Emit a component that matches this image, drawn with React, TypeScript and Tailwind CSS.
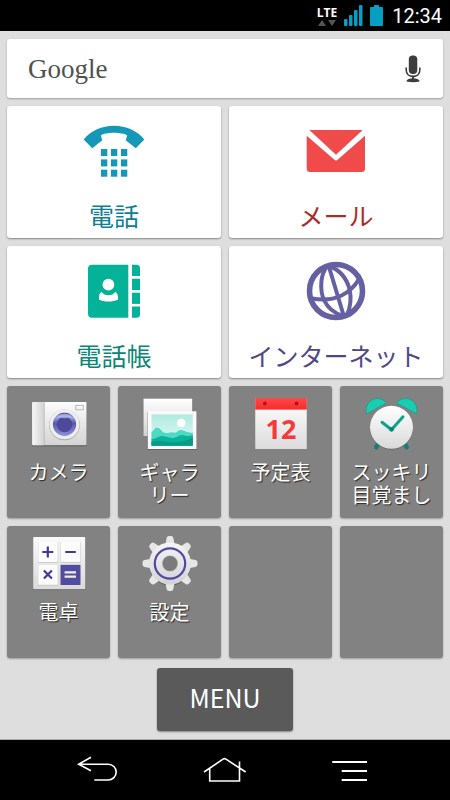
import React, { useState } from 'react';

function PhoneIcon() {
  return (
    <svg viewBox="0 0 64 64" className="size-16" fill="#1597b8" aria-hidden="true">
      <path d="M1.7 20.5C9 11.5 20 6.7 32 6.7S55 11.5 62.3 20.5L53.8 29.2L43.7 21.3L45.2 16.6C40.5 12.9 23.5 12.9 18.8 16.6L20.3 21.3L10.2 29.2Z" />
      {[30, 40.4, 50.7].map((y) =>
        [19, 29, 39].map((x) => <rect key={`${x}-${y}`} x={x} y={y} width="6.3" height="7" />)
      )}
    </svg>
  );
}

function MailIcon() {
  return (
    <svg viewBox="0 0 64 64" className="size-16" fill="#f04a4b" aria-hidden="true">
      <path d="M5.3 11H58.7L32 35.8Z" />
      <path d="M2.7 16.8L31 41.2Q32 42 33 41.2L61 16.8V49.5Q61 53 57.5 53H6.2Q2.7 53 2.7 49.5Z" />
    </svg>
  );
}

function ContactsIcon() {
  return (
    <svg viewBox="0 0 64 64" className="size-16" fill="#04b298" aria-hidden="true">
      <path d="M10 5.7H46.3V58.7H10Q6 58.7 6 54.7V9.7Q6 5.7 10 5.7Z" />
      <path d="M50 5.7H54.5Q58 5.7 58 9.2V17H50Z" />
      <rect x="50" y="19.7" width="8" height="11.4" />
      <rect x="50" y="33.7" width="8" height="11.2" />
      <path d="M50 47.4H58V55.2Q58 58.7 54.5 58.7H50Z" />
      <circle cx="26.4" cy="25.7" r="5.9" fill="#fff" />
      <path
        fill="#fff"
        d="M19.5 33C21 35 23.5 36.3 26.4 36.3S32 35 33.3 33C35.3 34 36.3 36.5 36 40.4C31 43.2 22 43.2 17 40.4C16.7 36.5 17.5 34 19.5 33Z"
      />
    </svg>
  );
}

function GlobeIcon() {
  return (
    <svg viewBox="0 0 64 64" className="size-16" fill="none" stroke="#6660a2" strokeWidth="4" aria-hidden="true">
      <circle cx="32" cy="32" r="26.5" strokeWidth="5.6" />
      <path d="M25 8L39.8 57" />
      <path d="M22.5 8C16.5 16 15.5 31 20 41C24 49.5 31 54.5 39 57" />
      <path d="M25 7C36 11 42.5 19 45.5 30C47.5 39 47 47 43 56" />
      <path d="M7 39.2C18 41.5 28 41 37 36.8C45 33 51 27 55 20" />
    </svg>
  );
}

function CameraIcon() {
  return (
    <svg viewBox="0 0 56 56" className="size-14" aria-hidden="true">
      <defs>
        <linearGradient id="camBody" x1="0" y1="0" x2="0" y2="1">
          <stop offset="0" stopColor="#fdfdfd" />
          <stop offset="1" stopColor="#d4d4d4" />
        </linearGradient>
        <linearGradient id="camGrip" x1="0" y1="0" x2="1" y2="0">
          <stop offset="0" stopColor="#f6f6f6" />
          <stop offset="1" stopColor="#d2d2d2" />
        </linearGradient>
        <linearGradient id="camLens" x1="0" y1="0" x2="0" y2="1">
          <stop offset="0" stopColor="#2c2a70" />
          <stop offset="0.2" stopColor="#9fa6e0" />
          <stop offset="0.45" stopColor="#5c58a8" />
          <stop offset="1" stopColor="#938fda" />
        </linearGradient>
      </defs>
      <rect x="1.2" y="7" width="54.3" height="43.2" rx="1" fill="#555" />
      <rect x="1.2" y="6" width="54.3" height="43.2" rx="1" fill="url(#camBody)" />
      <rect x="1.2" y="6" width="12" height="43.2" rx="1" fill="url(#camGrip)" />
      <path d="M13.3 6V49" stroke="#b5b5b5" strokeWidth="0.7" />
      <rect x="44.8" y="9.3" width="7.5" height="4.5" fill="#f4f4f4" stroke="#aaa" strokeWidth="0.8" />
      <circle cx="33.5" cy="28.8" r="15.4" fill="#aaa" />
      <circle cx="33.5" cy="28.3" r="15" fill="#eee" />
      <circle cx="33.5" cy="28.3" r="11.6" fill="url(#camLens)" />
      <circle cx="33.5" cy="28.5" r="7.8" fill="#4d4a9b" />
      <path d="M25.5 20.5Q33.5 14.5 41.5 20.5Q33.5 24 25.5 20.5Z" fill="#b9c4ee" opacity="0.7" />
    </svg>
  );
}

function GalleryIcon() {
  return (
    <svg viewBox="0 0 56 56" className="size-14" aria-hidden="true">
      <defs>
        <linearGradient id="galBack" x1="0" y1="0" x2="0" y2="1">
          <stop offset="0" stopColor="#fff" />
          <stop offset="1" stopColor="#d2d2d2" />
        </linearGradient>
        <linearGradient id="galSky" x1="0" y1="0" x2="0" y2="1">
          <stop offset="0" stopColor="#b0ebe1" />
          <stop offset="1" stopColor="#e2faf5" />
        </linearGradient>
      </defs>
      <rect x="1.5" y="3.5" width="48.7" height="37.6" fill="#666" />
      <rect x="1.5" y="2.7" width="48.7" height="37.6" fill="url(#galBack)" />
      <rect x="5.6" y="16" width="49.2" height="38" fill="#626262" />
      <rect x="5.8" y="15.3" width="48.7" height="37.7" fill="#fbfbfb" />
      <rect x="9.5" y="18.3" width="41.3" height="31.4" fill="url(#galSky)" />
      <circle cx="39.2" cy="27" r="4.3" fill="#fff" />
      <path
        d="M9.5 36C12 34.5 12.5 31.5 15 31.5C19 32 20 37 24 37C27 37 28.5 35.5 31 36.5C34 38 36 33.5 39 34C43 34.5 46 37.5 50.8 36.5V49.7H9.5Z"
        fill="#4fd9c4"
      />
      <path
        d="M9.5 43C14 43.5 16 39.5 21 40C27 41 29 43 33 41.5C37 40 39 38 43 39.5C46 40.5 48 40 50.8 39V49.7H9.5Z"
        fill="#08b59b"
      />
      <path d="M9.5 46C17 43 24 47 31 46.5C38 46 44 45 50.8 41.5V49.7H9.5Z" fill="#0a9a86" />
    </svg>
  );
}

function CalendarIcon() {
  return (
    <svg viewBox="0 0 56 56" className="size-14" aria-hidden="true">
      <defs>
        <linearGradient id="calPage" x1="0" y1="0" x2="0" y2="1">
          <stop offset="0" stopColor="#fff" />
          <stop offset="1" stopColor="#dcdcdc" />
        </linearGradient>
        <linearGradient id="calHead" x1="0" y1="0" x2="0" y2="1">
          <stop offset="0" stopColor="#f9494a" />
          <stop offset="1" stopColor="#fb2a2c" />
        </linearGradient>
      </defs>
      <rect x="2.2" y="3" width="51.6" height="51" fill="#5e5e5e" />
      <rect x="2.2" y="2" width="51.6" height="51.3" fill="url(#calPage)" />
      <rect x="2.2" y="2" width="51.6" height="11.6" fill="url(#calHead)" />
      <circle cx="11.9" cy="7.4" r="1.9" fill="#b31217" />
      <circle cx="43.5" cy="7.4" r="1.9" fill="#b31217" />
      <text
        x="28"
        y="43"
        textAnchor="middle"
        className="font-['Open_Sans',sans-serif] text-[27px] font-bold"
        fill="#f8393c"
      >
        12
      </text>
    </svg>
  );
}

function AlarmIcon() {
  return (
    <svg viewBox="0 0 56 56" className="size-14" aria-hidden="true">
      <defs>
        <linearGradient id="alarmFace" x1="0" y1="0" x2="0" y2="1">
          <stop offset="0" stopColor="#fff" />
          <stop offset="1" stopColor="#d9d9d9" />
        </linearGradient>
      </defs>
      <path d="M15 46L12.3 51.3M40 46L42.7 51.3" stroke="#0e8374" strokeWidth="4.5" strokeLinecap="round" />
      <path d="M2.5 17.8C-0.5 6 13 -3.5 22.5 7Z" fill="#19cdb0" stroke="#0c9a86" strokeWidth="0.6" />
      <path d="M52.5 17.8C55.5 6 42 -3.5 32.5 7Z" fill="#19cdb0" stroke="#0c9a86" strokeWidth="0.6" />
      <circle cx="27.5" cy="32.1" r="21.5" fill="#626262" />
      <circle cx="27.5" cy="31.3" r="21.5" fill="url(#alarmFace)" />
      <path
        d="M18 26.3L27.5 33.7L39 20.8"
        fill="none"
        stroke="#0aa48f"
        strokeWidth="3"
        strokeLinecap="round"
        strokeLinejoin="round"
      />
      <circle cx="27.5" cy="33.3" r="2.4" fill="#078576" />
    </svg>
  );
}

function CalculatorIcon() {
  return (
    <svg viewBox="0 0 56 56" className="size-14" aria-hidden="true">
      <defs>
        <linearGradient id="calcBody" x1="0" y1="0" x2="0" y2="1">
          <stop offset="0" stopColor="#fafafa" />
          <stop offset="1" stopColor="#dadada" />
        </linearGradient>
      </defs>
      <rect x="2.2" y="2" width="52" height="52" rx="1" fill="#5e5e5e" />
      <rect x="2.2" y="1" width="52" height="52.3" rx="1" fill="url(#calcBody)" />
      <g fill="#b8b8b8">
        <rect x="7" y="6" width="20.2" height="20.6" />
        <rect x="29.3" y="6" width="20.4" height="20.6" />
        <rect x="7" y="28.8" width="20.2" height="20.6" />
      </g>
      <g fill="#fcfcfc">
        <rect x="7.2" y="6" width="19.6" height="20" />
        <rect x="29.5" y="6" width="19.9" height="20" />
        <rect x="7.2" y="28.8" width="19.6" height="20" />
      </g>
      <rect x="29.5" y="28.8" width="20" height="20.2" fill="#524ca0" />
      <g fill="none" stroke="#4337a4" strokeWidth="2.2">
        <path d="M11.3 16H22.3M16.8 10.5V21.5M34.3 16H44.8" />
        <path d="M12.9 34.5L20.9 42.5M20.9 34.5L12.9 42.5" />
      </g>
      <path d="M33.6 36.3H45M33.6 40.7H45" stroke="#eee" strokeWidth="2.2" />
    </svg>
  );
}

function SettingsIcon() {
  return (
    <svg viewBox="0 0 56 56" className="size-14" aria-hidden="true">
      <defs>
        <linearGradient id="gearBody" gradientUnits="userSpaceOnUse" x1="0" y1="0" x2="0" y2="56">
          <stop offset="0" stopColor="#fafafa" />
          <stop offset="1" stopColor="#cdcdcd" />
        </linearGradient>
      </defs>
      <circle cx="28" cy="28.5" r="21" fill="#5f5f5f" />
      <g fill="#e6e6e6">
        {[0, 45, 90, 135, 180, 225, 270, 315].map((deg) => (
          <path
            key={deg}
            transform={`rotate(${deg} 28 27.5)`}
            d="M23.3 9L24.6 2Q25 0 27 0H29Q31 0 31.4 2L32.7 9Z"
          />
        ))}
      </g>
      <circle cx="28" cy="27.5" r="21" fill="url(#gearBody)" />
      <circle cx="28" cy="27.5" r="15.2" fill="none" stroke="#5147a8" strokeWidth="2.2" />
      <circle cx="28" cy="27.5" r="8" fill="#b5b5b5" />
      <circle cx="28" cy="27.5" r="7.4" fill="#7b7b7b" />
    </svg>
  );
}

const mainTiles = [
  { name: '電話', icon: <PhoneIcon />, color: 'text-[#0b7f98]' },
  { name: 'メール', icon: <MailIcon />, color: 'text-[#ab2a2c]' },
  { name: '電話帳', icon: <ContactsIcon />, color: 'text-[#0a8675]' },
  { name: 'インターネット', icon: <GlobeIcon />, color: 'text-[#4f4788]' },
];

const appTiles = [
  { name: 'カメラ', icon: <CameraIcon /> },
  { name: 'ギャラ\nリー', icon: <GalleryIcon /> },
  { name: '予定表', icon: <CalendarIcon /> },
  { name: 'スッキリ\n目覚まし', icon: <AlarmIcon /> },
  { name: '電卓', icon: <CalculatorIcon /> },
  { name: '設定', icon: <SettingsIcon /> },
];

function StatusBar() {
  return (
    <header className="flex h-[31px] items-center justify-end bg-black pr-2 text-white">
      <div className="mr-[7px] flex flex-col items-center">
        <span className="font-['Open_Sans',sans-serif] text-[12px] leading-[14px] font-bold">LTE</span>
        <svg viewBox="0 0 18 6" className="h-[6px] w-[18px]" fill="#555" aria-hidden="true">
          <path d="M0 6L4 0L8 6ZM10 0H18L14 6Z" />
        </svg>
      </div>
      <svg viewBox="0 0 19 21" className="mr-[7px] h-[21px] w-[19px]" fill="#04a0c3" aria-hidden="true">
        <rect x="0" y="14" width="3.5" height="7" rx="1" />
        <rect x="5" y="10" width="3.5" height="11" rx="1" />
        <rect x="10" y="5" width="3.5" height="16" rx="1" />
        <rect x="15" y="0" width="3.5" height="21" rx="1" />
      </svg>
      <svg viewBox="0 0 13 21" className="mr-[9px] h-[21px] w-[13px]" fill="#04a0c3" aria-hidden="true">
        <path d="M4 0H9V2H12Q13 2 13 3V20Q13 21 12 21H1Q0 21 0 20V3Q0 2 1 2H4Z" />
      </svg>
      <time className="font-['Roboto',sans-serif] text-[20px] leading-[30px]">12:34</time>
    </header>
  );
}

function SearchBar() {
  const [query, setQuery] = useState('');

  return (
    <form
      className="flex h-[59px] items-center rounded-[3px] bg-white pr-[22px] pl-[21px] shadow-[0_1px_2px_rgba(0,0,0,0.3)]"
      onSubmit={(e) => e.preventDefault()}
    >
      <label htmlFor="search" className="font-['Liberation_Serif',serif] text-[27px] leading-9 text-[#505050]">
        Google
      </label>
      <input
        id="search"
        type="text"
        value={query}
        onChange={(e) => setQuery(e.target.value)}
        className="mx-3 h-10 min-w-0 flex-1 bg-transparent text-lg outline-none"
      />
      <button type="button" aria-label="音声検索">
        <svg viewBox="0 0 16 28" className="h-7 w-4" fill="#3c3c3c" aria-hidden="true">
          <rect x="3.8" y="0.5" width="8.5" height="18.5" rx="4" />
          <path d="M1.2 12.5V15C1.2 19 4 21.4 8 21.4S14.8 19 14.8 15V12.5" fill="none" stroke="#3c3c3c" strokeWidth="1.6" />
          <path d="M7 21.5H9V24H7Z" />
          <path d="M1.5 26.5C1.5 24 5 23.6 8 23.6S14.5 24 14.5 26.5Q8 28 1.5 26.5Z" />
        </svg>
      </button>
    </form>
  );
}

function NavBar() {
  return (
    <nav className="flex h-[60px] items-center justify-center gap-[83px] bg-black">
      <button type="button" aria-label="戻る">
        <svg viewBox="0 0 44 28" className="h-7 w-11" fill="none" stroke="#fff" strokeWidth="1.6" aria-hidden="true">
          <path d="M15 1.3L2.7 8.2L15 14.7M2.7 8.2H32.3A7.9 7.9 0 0 1 32.3 24H18.3" />
        </svg>
      </button>
      <button type="button" aria-label="ホーム">
        <svg viewBox="0 0 44 28" className="h-7 w-11" fill="none" stroke="#fff" strokeWidth="1.6" aria-hidden="true">
          <path d="M1 16L20 3.2Q21.5 2 23 3.2L42.7 16M6.7 12.3V25H36.5V5.5" />
        </svg>
      </button>
      <button type="button" aria-label="メニュー">
        <svg viewBox="0 0 44 28" className="h-7 w-11" fill="none" stroke="#fff" strokeWidth="2" aria-hidden="true">
          <path d="M2.3 6H37M11.7 15H37M11.7 24H37" />
        </svg>
      </button>
    </nav>
  );
}

export default function App() {
  return (
    <div className="flex min-h-screen flex-col bg-[#dedede] font-['Noto_Sans_CJK_JP',sans-serif]">
      <StatusBar />
      <main className="flex flex-1 flex-col gap-2 border-b border-[#aaa] px-[7px] pt-2">
        <SearchBar />

        <div className="grid grid-cols-2 gap-2">
          {mainTiles.map((tile) => (
            <button
              key={tile.name}
              type="button"
              className="flex h-[132px] flex-col items-center gap-4 rounded-[3px] bg-white pt-[13px] shadow-[0_1px_2px_rgba(0,0,0,0.4)]"
            >
              {tile.icon}
              <span className={`text-[25px] leading-8 ${tile.color}`}>{tile.name}</span>
            </button>
          ))}
        </div>

        <div className="grid grid-cols-4 gap-2">
          {appTiles.map((tile) => (
            <button
              key={tile.name}
              type="button"
              className="flex h-[132px] flex-col items-center gap-2 rounded-[3px] bg-[#828282] pt-[10px] text-white shadow-[0_1px_2px_rgba(0,0,0,0.3)]"
            >
              {tile.icon}
              <span className="text-[20px] leading-[23px] whitespace-pre-line text-shadow-[1px_1px_1px_rgba(0,0,0,0.7)]">
                {tile.name}
              </span>
            </button>
          ))}
          {/* free slots */}
          <div className="h-[132px] rounded-[3px] bg-[#828282] shadow-[0_1px_2px_rgba(0,0,0,0.3)]"></div>
          <div className="h-[132px] rounded-[3px] bg-[#828282] shadow-[0_1px_2px_rgba(0,0,0,0.3)]"></div>
        </div>

        <button
          type="button"
          className="mx-auto mt-[2px] mb-2 h-[63px] w-[136px] rounded-[3px] bg-[#5a5a5a] pb-1.5 text-[25px] leading-8 text-white shadow-[0_1px_2px_rgba(0,0,0,0.4)]"
        >
          MENU
        </button>
      </main>
      <NavBar />
    </div>
  );
}
